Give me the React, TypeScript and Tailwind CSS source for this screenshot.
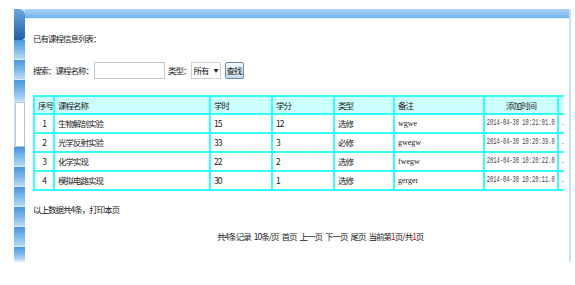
import React from 'react';

const font = "font-['SimSun','Noto_Sans_CJK_SC',sans-serif]";

const rows = [
  { no: 1, name: '生物解剖实验', hours: '15', credit: '12', type: '选修', note: 'wgwe', time: '2014-04-30 10:21:01.0' },
  { no: 2, name: '光学反射实验', hours: '33', credit: '3', type: '必修', note: 'gwegw', time: '2014-04-30 10:20:39.0' },
  { no: 3, name: '化学实现', hours: '22', credit: '2', type: '选修', note: 'fwegw', time: '2014-04-30 10:20:22.0' },
  { no: 4, name: '模拟电路实现', hours: '30', credit: '1', type: '选修', note: 'gerger', time: '2014-04-30 10:20:11.0' },
];

const Block = ({ h }: { h: string }) => (
  <div className={`${h} bg-gradient-to-b from-[#4a97dd] via-[#7cb6ea] to-[#b9dbf6] border-b border-[#d6ebfb]`} />
);

const Sidebar = () => (
  <div className="w-[11px] flex flex-col bg-[#d4e9fb]">
    <div className="h-[31px] bg-gradient-to-b from-[#6aa8e2] to-[#1f5fa8] rounded-tr-[6px] rounded-br-[4px]" />
    <Block h="h-[20px]" />
    <Block h="h-[20px]" />
    <Block h="h-[22px]" />
    <div className="h-[45px] bg-white border border-[#b8c4cf] ml-[1px]" />
    <Block h="h-[20px]" />
    <Block h="h-[20px]" />
    <Block h="h-[20px]" />
    <Block h="h-[20px]" />
    <Block h="h-[20px]" />
    <Block h="h-[14px]" />
  </div>
);

const th = 'border-2 border-[#33ffff] px-[3px] font-normal h-[18px] whitespace-nowrap';
const td = 'border-2 border-[#33ffff] px-[3px] h-[19px] whitespace-nowrap';

export default function App() {
  return (
    <div className={`w-[575px] h-[285px] bg-white pt-[9px] pl-[14px] text-[8.5px] tracking-[-1px] text-[#222] ${font}`}>
      <div className="flex h-[253px]">
        <Sidebar />
        <div className="w-[546px] flex flex-col border-r-2 border-[#c5e0f7]">
          <div className="h-[10px] bg-gradient-to-b from-[#a9d3f7] to-[#6fb2ee] border-b border-[#e3f1fd]" />
          <div className="pl-[8px] overflow-hidden flex-1">
            <div className="mt-[12px] h-[14px] leading-[14px]">已有课程信息列表：</div>
            <div className="mt-[16px] flex items-center h-[18px]">
              <span>搜索：课程名称：</span>
              <input className="w-[71px] h-[17px] border border-[#c8c8c8] ml-[1px]" />
              <span className="ml-[3px]">类型：</span>
              <div className="h-[17px] w-[30px] border border-[#d0d0d0] flex items-center pl-[2px] gap-[5px] whitespace-nowrap">
                <span>所有</span>
                <span className="text-[5px]">▼</span>
              </div>
              <button className="ml-[4px] h-[17px] px-[1px] border border-[#6b8aa6] rounded-[2px] bg-gradient-to-b from-[#f5f9fd] to-[#c8dcef] text-[8.5px] whitespace-nowrap">查找</button>
            </div>
            <table className="mt-[16px] border-collapse w-[530px] table-fixed">
              <colgroup>
                <col className="w-[20px]" />
                <col className="w-[156px]" />
                <col className="w-[62px]" />
                <col className="w-[62px]" />
                <col className="w-[60px]" />
                <col className="w-[90px]" />
                <col className="w-[74px]" />
                <col className="w-[6px]" />
              </colgroup>
              <thead>
                <tr className="bg-[#ccffff]">
                  <th className={`${th} text-center px-0`}>序号</th>
                  <th className={`${th} text-left`}>课程名称</th>
                  <th className={`${th} text-left`}>学时</th>
                  <th className={`${th} text-left`}>学分</th>
                  <th className={`${th} text-left`}>类型</th>
                  <th className={`${th} text-left`}>备注</th>
                  <th className={`${th} text-center`}>添加时间</th>
                  <th className={`${th} border-r-0 px-0`}></th>
                </tr>
              </thead>
              <tbody>
                {rows.map(r => (
                  <tr key={r.no}>
                    <td className={`${td} text-center`}>{r.no}</td>
                    <td className={td}>{r.name}</td>
                    <td className={td}>{r.hours}</td>
                    <td className={td}>{r.credit}</td>
                    <td className={td}>{r.type}</td>
                    <td className={`${td} font-['Liberation_Serif',serif] text-[8px] tracking-normal`}>{r.note}</td>
                    <td className={`${td} px-0 tracking-normal`}>
                      <div className="flex justify-center">
                        <span className="shrink-0 inline-block font-['Liberation_Mono',monospace] text-[9px] text-[#444] scale-x-[0.6] origin-center">{r.time}</span>
                      </div>
                    </td>
                    <td className={`${td} border-r-0 px-0 text-[6px] tracking-normal`}>-</td>
                  </tr>
                ))}
              </tbody>
            </table>
            <div className="mt-[11px] h-[14px] leading-[14px]">以上数据共4条，打印本页</div>
            <div className="mt-[14px] flex pl-[184px] gap-[3px] whitespace-nowrap">
              <span>共4条记录</span>
              <span>10条/页</span>
              <span>首页</span>
              <span>上一页</span>
              <span>下一页</span>
              <span>尾页</span>
              <span>当前第<span className="text-red-600">1</span>页/共<span className="text-red-600">1</span>页</span>
            </div>
          </div>
        </div>
      </div>
    </div>
  );
}
